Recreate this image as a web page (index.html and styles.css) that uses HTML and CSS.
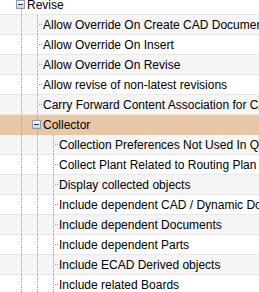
FILE: index.html
```html
<!doctype html><html lang="en"><head>
<meta charset="utf-8" />
<title>Tree</title>
<link rel="stylesheet" href="styles.css"></head><body>
<div class="tree">
	<div class="row"><span class="ind"></span><span class="node"><i class="box"></i></span><span class="label">Revise</span></div>
	<div class="row alt"><span class="ind"></span><span class="ind v"></span><span class="node leaf"></span><span class="label">Allow Override On Create CAD Documents</span></div>
	<div class="row"><span class="ind"></span><span class="ind v"></span><span class="node leaf"></span><span class="label">Allow Override On Insert</span></div>
	<div class="row alt"><span class="ind"></span><span class="ind v"></span><span class="node leaf"></span><span class="label">Allow Override On Revise</span></div>
	<div class="row"><span class="ind"></span><span class="ind v"></span><span class="node leaf"></span><span class="label">Allow revise of non-latest revisions</span></div>
	<div class="row alt"><span class="ind"></span><span class="ind v"></span><span class="node leaf"></span><span class="label">Carry Forward Content Association for CAD</span></div>
	<div class="row sel"><span class="ind"></span><span class="ind v"></span><span class="node"><i class="box"></i></span><span class="label">Collector</span></div>
	<div class="row alt"><span class="ind"></span><span class="ind v"></span><span class="ind v"></span><span class="node leaf"></span><span class="label">Collection Preferences Not Used In Query</span></div>
	<div class="row"><span class="ind"></span><span class="ind v"></span><span class="ind v"></span><span class="node leaf"></span><span class="label">Collect Plant Related to Routing Plan</span></div>
	<div class="row alt"><span class="ind"></span><span class="ind v"></span><span class="ind v"></span><span class="node leaf"></span><span class="label">Display collected objects</span></div>
	<div class="row"><span class="ind"></span><span class="ind v"></span><span class="ind v"></span><span class="node leaf"></span><span class="label">Include dependent CAD / Dynamic Documents</span></div>
	<div class="row alt"><span class="ind"></span><span class="ind v"></span><span class="ind v"></span><span class="node leaf"></span><span class="label">Include dependent Documents</span></div>
	<div class="row"><span class="ind"></span><span class="ind v"></span><span class="ind v"></span><span class="node leaf"></span><span class="label">Include dependent Parts</span></div>
	<div class="row alt"><span class="ind"></span><span class="ind v"></span><span class="ind v"></span><span class="node leaf"></span><span class="label">Include ECAD Derived objects</span></div>
	<div class="row"><span class="ind"></span><span class="ind v"></span><span class="ind v"></span><span class="node leaf"></span><span class="label">Include related Boards</span></div>
</div>
</body></html>
```

FILE: styles.css
```css
body{ margin: 0; font: 12px/19px "Liberation Sans", Arial, sans-serif; color: #000; background: #fff; overflow: hidden; --dot: #a0a0a0 }
.tree{ margin-top: -5px }
.row{ display: flex; height: 20px; white-space: nowrap; overflow: hidden; background: linear-gradient(#e8e8e8, #e8e8e8) bottom / 100% 1px no-repeat; background-color: #fff }
.row.alt{ background-color: #f5f5f5 }
.row.sel{ background: #e9c7a6 }
.ind{ width: 16px; flex: none }
.node{ width: 11px; flex: none }
.ind.v, .node{ background: repeating-linear-gradient(var(--dot) 0 1px, transparent 1px 2px) 5px 0 / 1px 100% no-repeat }
.node.leaf{ background: repeating-linear-gradient(var(--dot) 0 1px, transparent 1px 2px) 5px 0 / 1px 100% no-repeat,
	repeating-linear-gradient(to right, var(--dot) 0 1px, transparent 1px 2px) 7px 9px / 4px 1px no-repeat }
.box{ display: block; position: relative; margin-top: 5px; width: 7px; height: 7px; border: 1px solid #8a9cb3; background: linear-gradient(#fdfdfe, #c7d3e2) }
.box:before{ content: ''; position: absolute; left: 1px; top: 3px; width: 5px; height: 1px; background: #1e3354 }
.label{ flex: none; padding-top: 1px }
```
